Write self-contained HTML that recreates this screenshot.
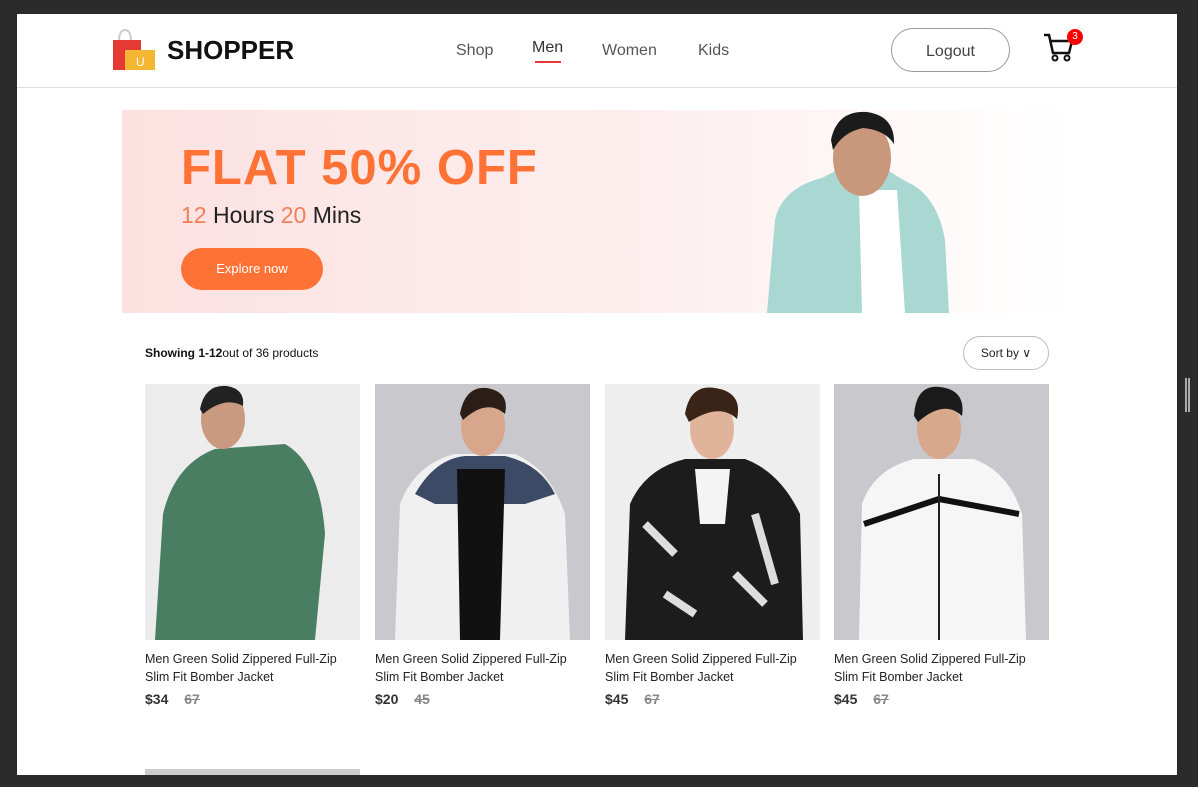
<!DOCTYPE html>
<html><head><meta charset="utf-8"><style>
*{margin:0;padding:0;box-sizing:border-box}
body{width:1198px;height:787px;background:#2b2b2b;position:relative;overflow:hidden;font-family:"Liberation Sans",sans-serif}
.page{position:absolute;left:17px;top:14px;width:1160px;height:761px;background:#fff;overflow:hidden}
.abs{position:absolute}
.nav{color:#555;font-size:16px;top:28px}
.card{position:absolute;top:370px;width:215px}
.img{height:256px;position:relative;overflow:hidden}
.t{font-size:12.5px;color:#222;line-height:18px;margin-top:10px}
.p{margin-top:5px;font-size:14px;font-weight:bold;color:#333}
.p s{color:#888;margin-left:12px;font-weight:bold}
</style></head><body>
<div class="page">
 <svg class="abs" style="left:94px;top:14px" width="46" height="44" viewBox="0 0 46 44">
  <path d="M8 14 Q8 2 14 2 Q20 2 20 14" stroke="#ccc" stroke-width="2" fill="none"/>
  <rect x="2" y="12" width="28" height="30" fill="#e53935"/>
  <rect x="14" y="22" width="30" height="20" fill="#f5b731"/>
  <text x="25" y="38" font-size="12" fill="#fff" font-family="Liberation Sans">U</text>
 </svg>
 <div class="abs" style="left:150px;top:21px;font-size:26px;font-weight:bold;color:#111">SHOPPER</div>
 <div class="abs nav" style="left:439px">Shop</div>
 <div class="abs nav" style="left:515px;top:25px;color:#333">Men</div>
 <div class="abs" style="left:518px;top:47px;width:26px;height:2px;background:#e53935"></div>
 <div class="abs nav" style="left:585px">Women</div>
 <div class="abs nav" style="left:681px">Kids</div>
 <div class="abs" style="left:874px;top:14px;width:119px;height:44px;border:1px solid #999;border-radius:22px;text-align:center;line-height:45px;font-size:16px;color:#444">Logout</div>
 <svg class="abs" style="left:1026px;top:19px" width="32" height="30" viewBox="0 0 32 30">
  <path d="M1 2h5l4 18h16l3-12H8" stroke="#111" stroke-width="2.5" fill="none"/>
  <circle cx="12" cy="25" r="2.5" fill="none" stroke="#111" stroke-width="2"/>
  <circle cx="24" cy="25" r="2.5" fill="none" stroke="#111" stroke-width="2"/>
 </svg>
 <div class="abs" style="left:1050px;top:15px;width:16px;height:16px;border-radius:50%;background:#f00;color:#fff;font-size:10px;text-align:center;line-height:16px">3</div>
 <div class="abs" style="left:0;top:73px;width:1160px;height:1px;background:#ddd"></div>
 <div class="abs" style="left:105px;top:96px;width:950px;height:203px;background:linear-gradient(90deg,#fde1e1 0%,#fdf0f0 60%,#fff 100%)"></div>
 <div class="abs" style="left:164px;top:126px;font-size:49px;font-weight:bold;color:#ff7236;letter-spacing:1px">FLAT 50% OFF</div>
 <div class="abs" style="left:164px;top:188px;font-size:23px;color:#222"><span style="color:#f27f57">12</span> Hours <span style="color:#f27f57">20</span> Mins</div>
 <div class="abs" style="left:164px;top:234px;width:142px;height:42px;border-radius:21px;background:#ff7236;color:#fff;font-size:13px;text-align:center;line-height:42px">Explore now</div>
 <svg class="abs" style="left:750px;top:96px" width="185" height="203" viewBox="0 0 185 203">
  <path d="M0 203 L8 110 Q15 78 55 68 L70 60 L120 60 L140 72 Q170 85 178 130 L182 203Z" fill="#a9d8d2"/>
  <path d="M92 80 L130 80 L138 203 L95 203Z" fill="#fff"/>
  <ellipse cx="95" cy="48" rx="29" ry="38" fill="#c9987c"/>
  <path d="M64 30 Q70 0 100 2 Q128 6 127 34 Q118 20 96 18 Q76 22 66 40Z" fill="#1b1b1b"/>
 </svg>
 <div class="abs" style="left:128px;top:332px;font-size:12px;color:#111"><b>Showing 1-12</b>out of 36 products</div>
 <div class="abs" style="left:946px;top:322px;width:86px;height:34px;border:1px solid #bbb;border-radius:17px;font-size:12px;line-height:32px;text-align:center;color:#222">Sort by ∨</div>
 <div class="card" style="left:128px"><div class="img" style="background:#ececec">
  <svg width="215" height="256"><path d="M10 256 L18 130 Q30 80 70 65 L140 60 Q175 80 180 150 L170 256Z" fill="#4a7e62"/><ellipse cx="78" cy="35" rx="22" ry="30" fill="#c99a80"/><path d="M55 25 Q60 0 82 2 Q100 5 98 22 Q80 12 58 30Z" fill="#222"/></svg></div>
  <div class="t">Men Green Solid Zippered Full-Zip Slim Fit Bomber Jacket</div><div class="p">$34 <s>67</s></div></div>
 <div class="card" style="left:358px"><div class="img" style="background:#c9c9cd">
  <svg width="215" height="256"><path d="M20 256 L25 120 Q40 80 80 70 L140 70 Q175 85 190 130 L195 256Z" fill="#f0f0f0"/><path d="M40 110 Q60 75 90 72 L130 72 Q165 80 180 110 L150 120 L60 120Z" fill="#3d4a66"/><path d="M82 85 L130 85 L125 256 L85 256Z" fill="#111"/><ellipse cx="108" cy="42" rx="22" ry="30" fill="#d8a78b"/><path d="M85 30 Q90 2 112 4 Q135 8 130 30 Q112 14 88 36Z" fill="#2b1e17"/></svg></div>
  <div class="t">Men Green Solid Zippered Full-Zip Slim Fit Bomber Jacket</div><div class="p">$20 <s>45</s></div></div>
 <div class="card" style="left:588px"><div class="img" style="background:#eeeeee">
  <svg width="215" height="256"><path d="M20 256 L25 120 Q40 85 80 75 L140 75 Q175 88 195 130 L198 256Z" fill="#1c1c1c"/><path d="M40 140 L70 170 M150 130 L170 200 M60 210 L90 230 M130 190 L160 220" stroke="#ddd" stroke-width="8"/><path d="M90 85 L125 85 L120 140 L95 140Z" fill="#f4f4f4"/><ellipse cx="107" cy="45" rx="22" ry="30" fill="#e0b49a"/><path d="M80 30 Q85 0 110 4 Q138 8 132 35 Q115 18 84 38Z" fill="#3a2418"/></svg></div>
  <div class="t">Men Green Solid Zippered Full-Zip Slim Fit Bomber Jacket</div><div class="p">$45 <s>67</s></div></div>
 <div class="card" style="left:817px"><div class="img" style="background:#c9c9cd">
  <svg width="215" height="256"><path d="M25 256 L28 120 Q40 85 80 75 L140 75 Q175 88 188 130 L192 256Z" fill="#f6f6f6"/><path d="M30 140 L105 115 L185 130" stroke="#111" stroke-width="6" fill="none"/><path d="M105 90 L105 256" stroke="#222" stroke-width="2"/><ellipse cx="105" cy="45" rx="22" ry="30" fill="#d8a88c"/><path d="M80 32 Q82 0 106 3 Q132 6 128 32 Q110 15 84 38Z" fill="#1a1a1a"/></svg></div>
  <div class="t">Men Green Solid Zippered Full-Zip Slim Fit Bomber Jacket</div><div class="p">$45 <s>67</s></div></div>
 <div class="abs" style="left:128px;top:755px;width:215px;height:10px;background:#ccc"></div>
</div>
<div class="abs" style="left:1185px;top:378px;width:5px;height:34px;border-left:2px solid #aaa;border-right:2px solid #aaa"></div>
</body></html>
